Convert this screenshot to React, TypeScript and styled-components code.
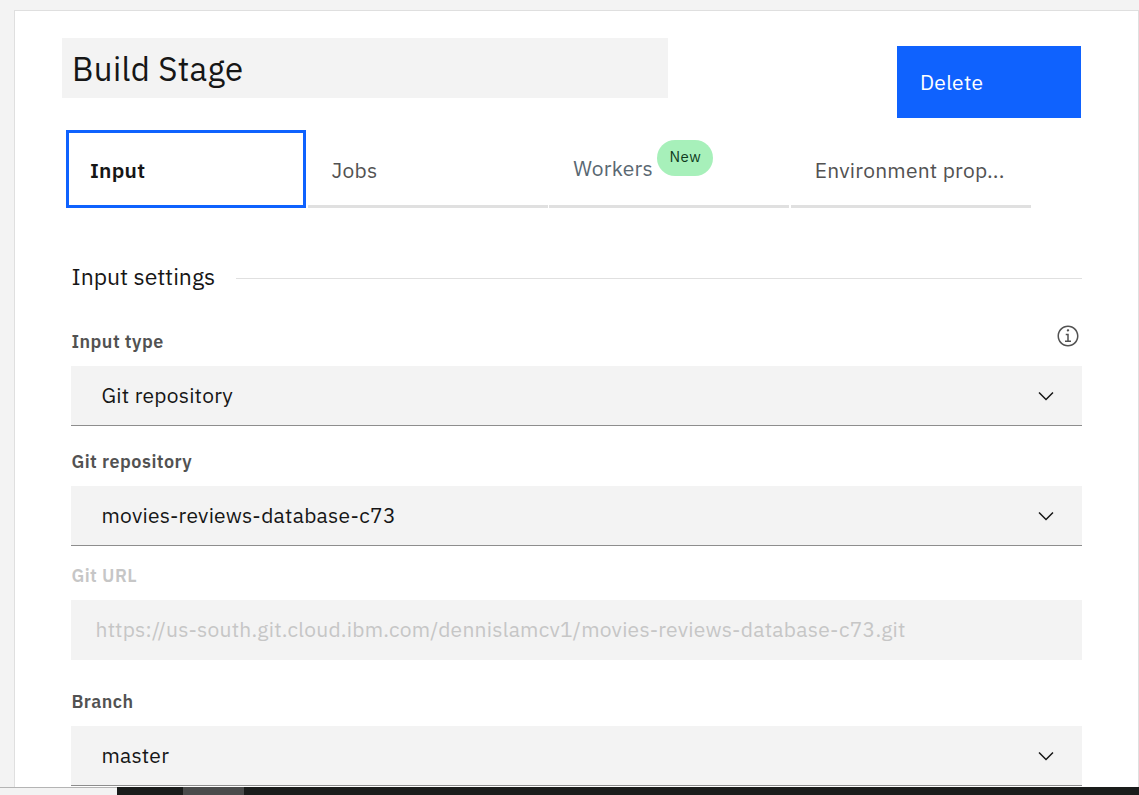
import React from "react";
import styled, { createGlobalStyle } from "styled-components";

const GlobalStyle = createGlobalStyle`
  *, *::before, *::after { box-sizing: border-box; }
  html, body { margin: 0; padding: 0; overflow: hidden; }
  body {
    background: #f3f3f3;
    color: #161616;
    font-family: "IBM Plex Sans", Roboto, "Noto Sans", sans-serif;
  }
`;

const Screen = styled.div`
  display: flex;
  flex-direction: column;
  width: 1139px;
  height: 795px;
  overflow: hidden;
`;

const Panel = styled.main`
  flex: 1;
  min-height: 0;
  margin: 10px 0 0 14px;
  padding: 27px 56px 0 47px;
  background: #fff;
  border: 1px solid #dfdfdf;
  border-bottom: 0;
  overflow: hidden;
`;

const Header = styled.header`
  display: flex;
  justify-content: space-between;
  align-items: flex-start;
  height: 92px;
  padding-right: 1px;
`;

const StageTitle = styled.h1`
  display: flex;
  align-items: center;
  width: 606px;
  height: 60px;
  margin: 0;
  padding: 1px 0 0 10px;
  background: #f3f3f3;
  font-size: 33px;
  font-weight: 400;
  letter-spacing: 0.3px;
`;

const DeleteButton = styled.button`
  width: 184px;
  height: 72px;
  margin-top: 8px;
  padding: 0 24px 0 23px;
  border: 0;
  background: #0f62fe;
  color: #fff;
  font: inherit;
  font-size: 21px;
  letter-spacing: 0.26px;
  text-align: left;
`;

const Tabs = styled.nav`
  display: flex;
  gap: 1.6px;
  margin-left: 4px;
`;

const Tab = styled.div<{ $active?: boolean }>`
  display: flex;
  align-items: center;
  width: 240px;
  height: 78px;
  padding: ${(p) => (p.$active ? "2px 0 0 21px" : "5px 0 0 24px")};
  border: 0 solid ${(p) => (p.$active ? "#0f62fe" : "#e0e0e0")};
  border-width: ${(p) => (p.$active ? "3px" : "0 0 3px")};
  color: ${(p) => (p.$active ? "#161616" : "#525252")};
  font-size: 21px;
  font-weight: ${(p) => (p.$active ? 600 : 400)};
  letter-spacing: 0.24px;
  white-space: nowrap;
`;

const WorkersLabel = styled.span`
  margin-bottom: 4px;
  color: #5a6872;
`;

const Badge = styled.span`
  display: flex;
  align-items: center;
  justify-content: center;
  width: 56px;
  height: 36px;
  margin: 0 0 24px 4px;
  padding: 0 0 3px 1px;
  border-radius: 18px;
  background: #a7f0ba;
  color: #0e3a1c;
  font-size: 15px;
  font-weight: 400;
  letter-spacing: 0.48px;
`;

const SectionHeading = styled.h2`
  display: flex;
  align-items: center;
  gap: 21px;
  height: 30px;
  margin: 55px 0 0 9px;
  padding-left: 0.5px;
  font-size: 23px;
  font-weight: 400;
  letter-spacing: -0.03px;

  &::after {
    content: "";
    flex: 1;
    height: 1px;
    background: #e0e0e0;
  }
`;

const HeadingText = styled.span`
  margin-bottom: 4px;
`;

const Field = styled.section<{ $gap: number }>`
  margin: ${(p) => p.$gap}px 0 0 9px;
`;

const LabelRow = styled.div`
  display: flex;
  justify-content: space-between;
  height: 36px;
  padding: 0 2px 0 0.4px;
`;

const Label = styled.label<{ $disabled?: boolean }>`
  color: ${(p) => (p.$disabled ? "#c6c6c6" : "#525252")};
  font-size: 18px;
  font-weight: 600;
  line-height: 24px;
  letter-spacing: 0.48px;
`;

const Control = styled.div<{ $disabled?: boolean }>`
  display: flex;
  align-items: center;
  justify-content: space-between;
  height: 60px;
  padding: 0 24px 0 ${(p) => (p.$disabled ? 24.5 : 30.5)}px;
  border-bottom: ${(p) => (p.$disabled ? "0" : "1px solid #8d8d8d")};
  background: #f3f3f3;
  color: ${(p) => (p.$disabled ? "#c6c6c6" : "#161616")};
  font-size: 21px;
  font-weight: 400;
  letter-spacing: 0.24px;
`;

const Value = styled.span`
  margin-bottom: 2px;
`;

const InfoSvg = styled.svg`
  margin-top: -6px;
  fill: #525252;
`;

const Taskbar = styled.footer`
  display: flex;
  height: 8px;
  background: #1a1c1b;
`;

const TaskbarSearch = styled.div`
  width: 117px;
  border-top: 1px solid #b4b4b4;
  background: #f3f3f3;
`;

const TaskbarItem = styled.div`
  width: 61px;
  margin-left: 66px;
  background: #4a4b4b;
`;

const Chevron = () => (
  <svg width="24" height="24" viewBox="0 0 16 16" fill="#161616">
    <path d="M8 11 3 6l.7-.7L8 9.6l4.3-4.3.7.7z" />
  </svg>
);

const InfoIcon = () => (
  <InfoSvg width="24" height="24" viewBox="0 0 16 16">
    <path d="M8.5 11V6.5h-2v1h1V11H6v1h4v-1zM8 3.5c-.4 0-.8.3-.8.8s.4.7.8.7.8-.3.8-.8-.4-.7-.8-.7z" />
    <path d="M8 15c-3.9 0-7-3.1-7-7s3.1-7 7-7 7 3.1 7 7-3.1 7-7 7zM8 2C4.7 2 2 4.7 2 8s2.7 6 6 6 6-2.7 6-6-2.7-6-6-6z" />
  </InfoSvg>
);

interface FieldProps {
  label: string;
  value: string;
  gap: number;
  info?: boolean;
  disabled?: boolean;
}

const FormField = ({ label, value, gap, info, disabled }: FieldProps) => (
  <Field $gap={gap}>
    <LabelRow>
      <Label $disabled={disabled}>{label}</Label>
      {info && <InfoIcon />}
    </LabelRow>
    <Control $disabled={disabled}>
      <Value>{value}</Value>
      {!disabled && <Chevron />}
    </Control>
  </Field>
);

export default function App() {
  return (
    <>
      <GlobalStyle />
      <Screen>
        <Panel>
          <Header>
            <StageTitle>Build Stage</StageTitle>
            <DeleteButton>Delete</DeleteButton>
          </Header>
          <Tabs>
            <Tab $active>Input</Tab>
            <Tab>Jobs</Tab>
            <Tab>
              <WorkersLabel>Workers</WorkersLabel>
              <Badge>New</Badge>
            </Tab>
            <Tab>Environment prop...</Tab>
          </Tabs>
          <SectionHeading>
            <HeadingText>Input settings</HeadingText>
          </SectionHeading>
          <FormField label="Input type" value="Git repository" gap={37} info />
          <FormField label="Git repository" value="movies-reviews-database-c73" gap={24} />
          <FormField
            label="Git URL"
            value="https://us-south.git.cloud.ibm.com/dennislamcv1/movies-reviews-database-c73.git"
            gap={18}
            disabled
          />
          <FormField label="Branch" value="master" gap={30} />
        </Panel>
        <Taskbar>
          <TaskbarSearch />
          <TaskbarItem />
        </Taskbar>
      </Screen>
    </>
  );
}
